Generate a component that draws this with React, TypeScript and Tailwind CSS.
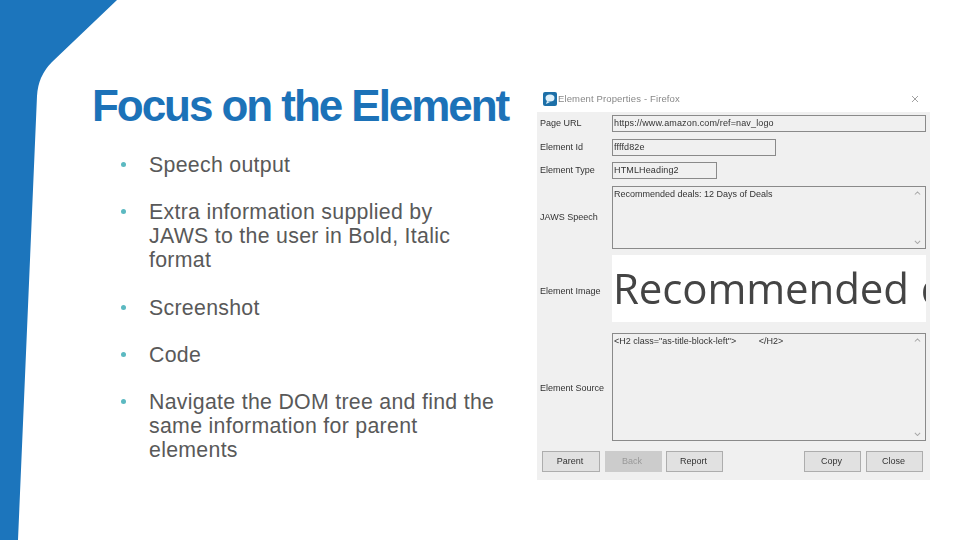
const bullets = [
  ["Speech output"],
  ["Extra information supplied by", "JAWS to the user in Bold, Italic", "format"],
  ["Screenshot"],
  ["Code"],
  ["Navigate the DOM tree and find the", "same information for parent", "elements"],
]

function Field({ label, className, children }: { label: string; className: string; children?: React.ReactNode }) {
  return (
    <div className="flex items-center">
      <div className="w-[75px] shrink-0 pl-[3px] text-[9px] text-[#333]">{label}</div>
      <div className={`border border-[#8a8a8a] bg-[#f0f0f0] px-[1px] text-[9px] tracking-[0.14px] text-[#333] ${className}`}>{children}</div>
    </div>
  )
}

function ScrollBox({ label, labelClass, className, children }: { label: string; labelClass?: string; className: string; children?: React.ReactNode }) {
  return (
    <div className="flex items-center">
      <div className={`w-[75px] shrink-0 pl-[3px] text-[9px] text-[#333] ${labelClass ?? ""}`}>{label}</div>
      <div className={`flex justify-between border border-[#8a8a8a] bg-[#f0f0f0] pl-[1px] text-[9px] text-[#333] ${className}`}>
        <div className="pt-[1px] whitespace-pre">{children}</div>
        <div className="flex w-[15px] flex-col justify-between py-[4px] text-center text-[#a8a8a8]">
          <svg viewBox="0 0 8 5" className="mx-auto w-[7px]"><path d="M1 4l3-3 3 3" fill="none" stroke="currentColor" strokeWidth="1.2" /></svg>
          <svg viewBox="0 0 8 5" className="mx-auto w-[7px]"><path d="M1 1l3 3 3-3" fill="none" stroke="currentColor" strokeWidth="1.2" /></svg>
        </div>
      </div>
    </div>
  )
}

function Btn({ label, width, disabled }: { label: string; width: string; disabled?: boolean }) {
  return (
    <div
      className={`flex h-[21px] items-center justify-center border pr-[2px] text-[9px] ${width} ${
        disabled ? "border-[#ccc] bg-[#ccc] text-[#999]" : "border-[#adadad] bg-[#e1e1e1] text-[#333]"
      }`}
    >
      {label}
    </div>
  )
}

export default function App() {
  return (
    <div
      className="relative h-[540px] w-[960px] overflow-hidden bg-white"
      style={{ fontFamily: '"Liberation Sans", Arial, sans-serif' }}
    >
      <svg className="absolute top-0 left-0" width="120" height="540" viewBox="0 0 120 540">
        <path d="M0 0H117L52 62Q38 76 37 96L18 540H0Z" fill="#1c75bc" />
      </svg>

      <div className="relative flex h-full">
        <div className="w-[537px] shrink-0 pt-[82px] pl-[92px]">
          <h1 className="text-[44px] leading-[48px] font-bold tracking-[-2.05px] whitespace-nowrap text-[#1c72b8]">
            Focus on the Element
          </h1>
          <ul className="mt-[23px] flex flex-col gap-[23.25px] pl-[28.5px] text-[21.3px] leading-[24px] tracking-[0.3px] text-[#595959]">
            {bullets.map((lines) => (
              <li key={lines[0]} className="flex">
                <span className="mt-[9px] mr-[23.5px] h-[5px] w-[5px] shrink-0 rounded-full bg-[#5bb9c1]" />
                <span className="whitespace-nowrap">
                  {lines.map((l) => (
                    <div key={l}>{l}</div>
                  ))}
                </span>
              </li>
            ))}
          </ul>
        </div>

        <div className="mt-[85px] h-[395px] w-[393px] shrink-0 blur-[0.4px]">
          <div className="flex h-[27px] items-center justify-between pt-[1px] pr-[11px] pl-[6px] text-[9.5px] text-[#888]">
            <div className="flex items-center gap-[1px]">
              <svg width="14" height="14" viewBox="0 0 14 14">
                <rect width="14" height="14" rx="2" fill="#1c6fa8" />
                <ellipse cx="7" cy="6" rx="4.5" ry="3.6" fill="#dff1fb" />
                <path d="M4 9l-1 3 4-2z" fill="#dff1fb" />
              </svg>
              <span className="tracking-[0.13px]">Element Properties - Firefox</span>
            </div>
            <svg width="8" height="8" viewBox="0 0 8 8">
              <path d="M1 1l6 6M7 1L1 7" stroke="#8a8a8a" strokeWidth="0.8" />
            </svg>
          </div>
          <div className="flex h-[368px] flex-col bg-[#f0f0f0] pt-[3px] pr-[4px]">
            <Field label="Page URL" className="h-[17px] w-[314px] leading-[15px]">https://www.amazon.com/ref=nav_logo</Field>
            <div className="mt-[7px]">
              <Field label="Element Id" className="h-[17px] w-[164px] leading-[15px]">ffffd82e</Field>
            </div>
            <div className="mt-[6px]">
              <Field label="Element Type" className="h-[17px] w-[105px] leading-[15px]">HTMLHeading2</Field>
            </div>
            <div className="mt-[7px]">
              <ScrollBox label="JAWS Speech" className="h-[63px] w-[314px]">Recommended deals: 12 Days of Deals</ScrollBox>
            </div>
            <div className="mt-[6px] flex items-center">
              <div className="w-[75px] shrink-0 pt-[6px] pl-[3px] text-[9px] text-[#333]">Element Image</div>
              <div
                className="flex h-[67px] w-[314px] items-center overflow-hidden bg-white pb-[2px] pl-[1px] text-[42px] tracking-[-0.1px] [word-spacing:1px] whitespace-nowrap text-[#444]"
                style={{ fontFamily: '"Open Sans", sans-serif' }}
              >
                Recommended d
              </div>
            </div>
            <div className="mt-[11px]">
              <ScrollBox label="Element Source" labelClass="pt-[4px]" className="h-[108px] w-[314px]">
                {'<H2 class="as-title-block-left">         </H2>'}
              </ScrollBox>
            </div>
            <div className="mt-[10px] flex pr-[3px] pl-[5px]">
              <div className="flex gap-[4.5px]">
                <Btn label="Parent" width="w-[58px]" />
                <Btn label="Back" width="w-[57px]" disabled />
                <Btn label="Report" width="w-[57px]" />
              </div>
              <div className="ml-auto flex gap-[5px]">
                <Btn label="Copy" width="w-[57px]" />
                <Btn label="Close" width="w-[57px]" />
              </div>
            </div>
          </div>
        </div>
      </div>
    </div>
  )
}
